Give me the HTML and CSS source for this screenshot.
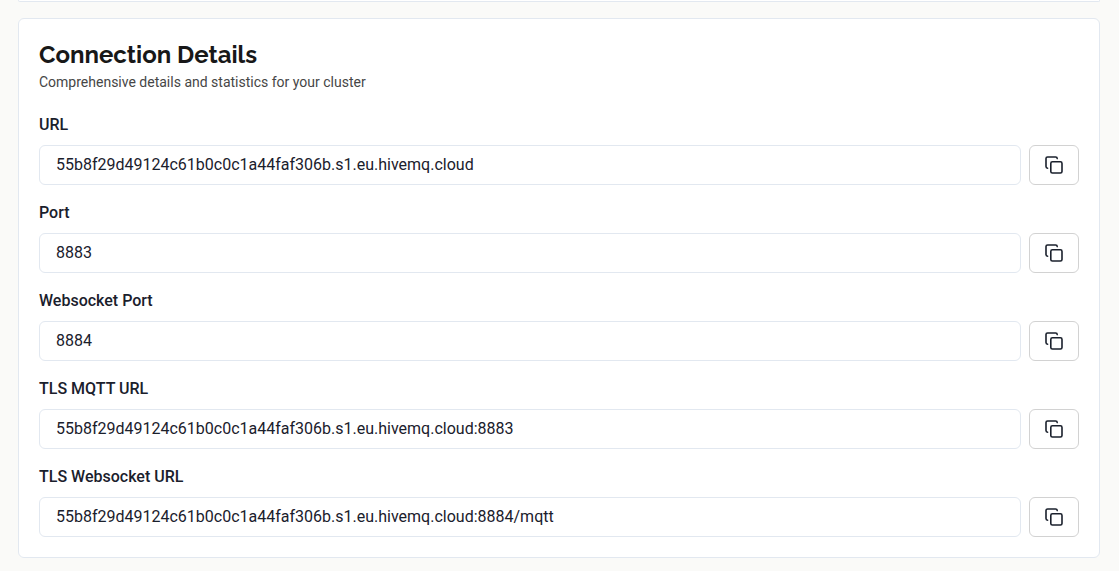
FILE: index.html
```html
<!DOCTYPE html>
<html lang="en">
<head>
<meta charset="utf-8">
<title>Connection Details</title>
<link rel="stylesheet" href="styles.css">
</head>
<body>
<svg class="sprite" aria-hidden="true">
  <symbol id="copy" viewBox="-0.5 -0.5 25 25">
    <rect x="8" y="8" width="14" height="14" rx="2"/>
    <path d="M4 16c-1.1 0-2-.9-2-2V4c0-1.100.9-2 2-2h10c1.100 0 2 .9 2 2"/>
  </symbol>
</svg>
<main class="page">
  <section class="card card-previous"></section>
  <section class="card">
    <header class="card-header">
      <h2 class="title">Connection Details</h2>
      <p class="subtitle">Comprehensive details and statistics for your cluster</p>
    </header>
    <div class="fields">
      <div class="field">
        <label class="label" for="url">URL</label>
        <div class="row">
          <input class="input" id="url" type="text" readonly value="55b8f29d49124c61b0c0c1a44faf306b.s1.eu.hivemq.cloud">
          <button class="copy" type="button" aria-label="Copy URL"><svg class="icon"><use href="#copy"/></svg></button>
        </div>
      </div>
      <div class="field">
        <label class="label" for="port">Port</label>
        <div class="row">
          <input class="input" id="port" type="text" readonly value="8883">
          <button class="copy" type="button" aria-label="Copy Port"><svg class="icon"><use href="#copy"/></svg></button>
        </div>
      </div>
      <div class="field">
        <label class="label" for="ws-port">Websocket Port</label>
        <div class="row">
          <input class="input" id="ws-port" type="text" readonly value="8884">
          <button class="copy" type="button" aria-label="Copy Websocket Port"><svg class="icon"><use href="#copy"/></svg></button>
        </div>
      </div>
      <div class="field">
        <label class="label" for="mqtt-url">TLS MQTT URL</label>
        <div class="row">
          <input class="input" id="mqtt-url" type="text" readonly value="55b8f29d49124c61b0c0c1a44faf306b.s1.eu.hivemq.cloud:8883">
          <button class="copy" type="button" aria-label="Copy TLS MQTT URL"><svg class="icon"><use href="#copy"/></svg></button>
        </div>
      </div>
      <div class="field">
        <label class="label" for="ws-url">TLS Websocket URL</label>
        <div class="row">
          <input class="input" id="ws-url" type="text" readonly value="55b8f29d49124c61b0c0c1a44faf306b.s1.eu.hivemq.cloud:8884/mqtt">
          <button class="copy" type="button" aria-label="Copy TLS Websocket URL"><svg class="icon"><use href="#copy"/></svg></button>
        </div>
      </div>
    </div>
  </section>
</main>
</body>
</html>
```
FILE: styles.css
```css
* {
  box-sizing: border-box;
}

body {
  margin: 0;
  background: #fafaf8;
  color: #1a202c;
  font-family: Roboto, sans-serif;
  font-size: 16px;
  line-height: 24px;
}

.sprite {
  display: none;
}

.page {
  display: flex;
  flex-direction: column;
  gap: 16px;
  padding: 0 19px 13px 18px;
}

.card {
  padding: 20px;
  border: 1px solid #e2e8f0;
  border-radius: 6px;
  background: #fff;
}

/* Tail of the card above */
.card-previous {
  height: 2px;
  padding: 0;
  border-top: 0;
  border-radius: 0 0 6px 6px;
}

.card-header {
  margin-bottom: 20px;
}

.title {
  margin: 0;
  color: #181818;
  font-family: Raleway, Lato, sans-serif;
  font-size: 24px;
  font-weight: 700;
  line-height: 32px;
}

.subtitle {
  margin: 0;
  color: #464646;
  font-size: 14px;
  line-height: 22px;
}

.fields {
  display: flex;
  flex-direction: column;
  gap: 16px;
}

.field {
  display: flex;
  flex-direction: column;
  gap: 8px;
}

.label {
  font-weight: 500;
}

.row {
  display: flex;
  gap: 8px;
}

.input {
  flex: 1;
  min-width: 0;
  height: 40px;
  padding: 0 16px 2px;
  border: 1px solid #e2e8f0;
  border-radius: 6px;
  background: #fff;
  color: inherit;
  font: inherit;
}

.copy {
  display: flex;
  align-items: center;
  justify-content: center;
  width: 50px;
  height: 40px;
  padding: 0;
  border: 1px solid #d2d2d2;
  border-radius: 6px;
  background: #fff;
  color: #1a202c;
}

.icon {
  width: 20px;
  height: 20px;
  fill: none;
  stroke: currentColor;
  stroke-width: 2;
  stroke-linecap: round;
  stroke-linejoin: round;
}
```
